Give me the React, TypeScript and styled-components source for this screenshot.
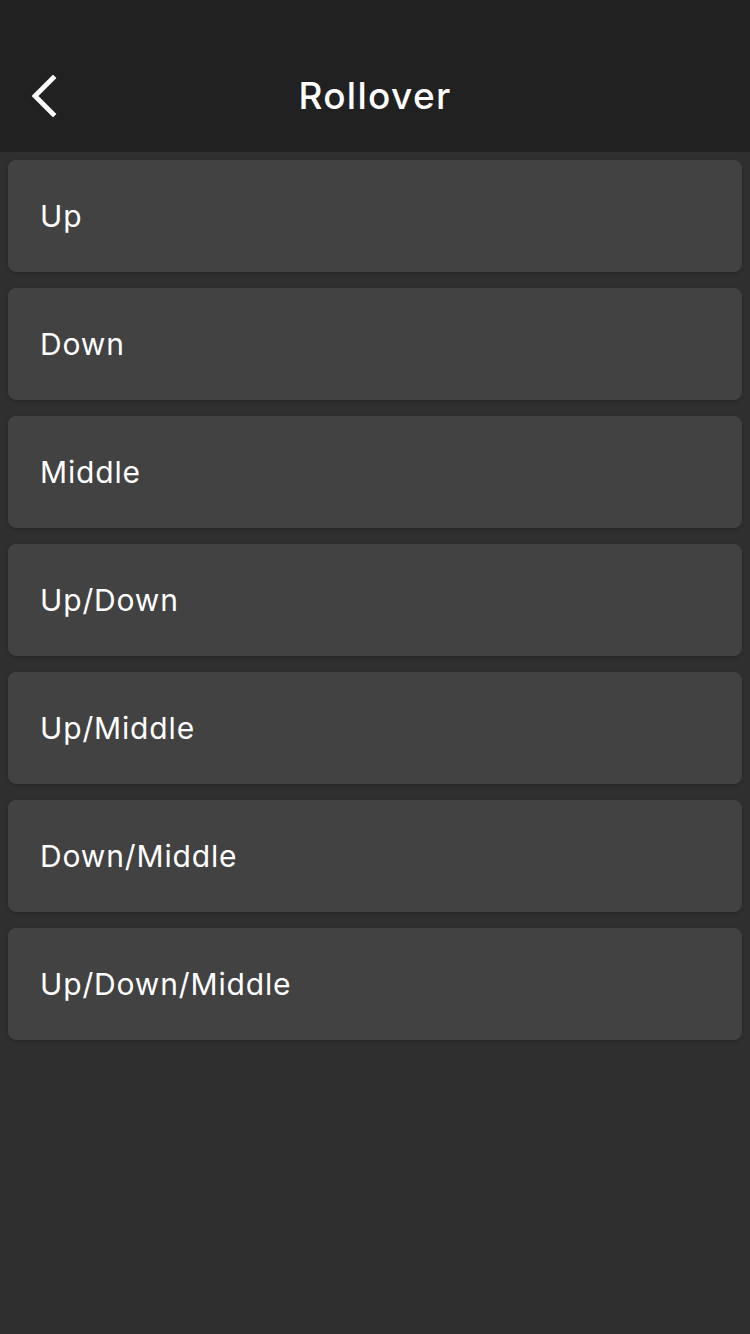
import styled, { createGlobalStyle } from "styled-components";

const GlobalStyle = createGlobalStyle`
  html, body {
    margin: 0;
    padding: 0;
    background: #2f2f2f;
  }
  body {
    font-family: Inter, Roboto, "Noto Sans", sans-serif;
    -webkit-font-smoothing: antialiased;
  }
`;

const options = [
  "Up",
  "Down",
  "Middle",
  "Up/Down",
  "Up/Middle",
  "Down/Middle",
  "Up/Down/Middle",
];

export default function App() {
  return (
    <>
      <GlobalStyle />
      <Screen>
        <Header>
          <BackButton aria-label="Back">
            <svg width="28" height="42" viewBox="0 0 28 42" fill="none">
              <path
                d="M24 3 L6 21 L24 39"
                stroke="#fff"
                strokeWidth="4.8"
                strokeLinecap="square"
              />
            </svg>
          </BackButton>
          <Title>Rollover</Title>
        </Header>
        <List>
          {options.map((o) => (
            <Item key={o}>{o}</Item>
          ))}
        </List>
      </Screen>
    </>
  );
}

const Screen = styled.div`
  min-height: 1334px;
  background: #2f2f2f;
  display: flex;
  flex-direction: column;
`;

const Header = styled.header`
  position: relative;
  height: 152px;
  background: #212121;
  display: flex;
  align-items: flex-end;
  justify-content: center;
  padding-bottom: 34px;
  box-sizing: border-box;
`;

const BackButton = styled.button`
  position: absolute;
  left: 29px;
  top: 75px;
  background: none;
  border: none;
  padding: 0;
  cursor: pointer;
  display: flex;
`;

const Title = styled.h1`
  margin: 0;
  color: #fff;
  font-size: 37px;
  font-weight: 500;
  line-height: 44px;
  letter-spacing: 1.3px;
`;

const List = styled.div`
  display: flex;
  flex-direction: column;
  gap: 16px;
  padding: 8px;
`;

const Item = styled.div`
  height: 112px;
  background: #424242;
  border-radius: 8px;
  box-shadow: 0 1px 3px rgba(0, 0, 0, 0.25);
  display: flex;
  align-items: center;
  padding-left: 32px;
  color: #fff;
  font-size: 30px;
  font-weight: 400;
  letter-spacing: 0.85px;
  cursor: pointer;
`;
